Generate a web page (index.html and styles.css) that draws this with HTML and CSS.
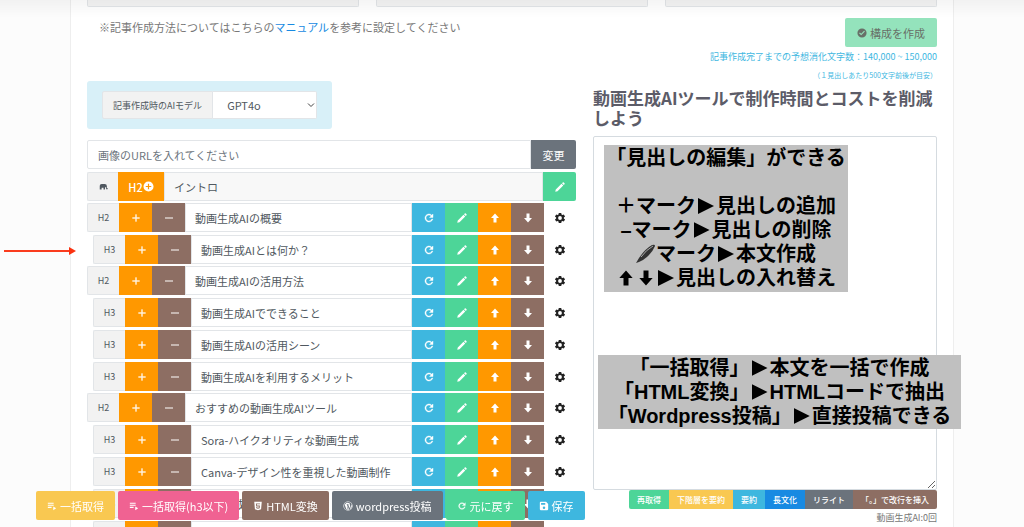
FILE: index.html
```html
<!DOCTYPE html>
<html lang="ja">
<head>
<meta charset="utf-8">
<title>記事作成</title>
<link rel="stylesheet" href="styles.css">
</head>
<body>
<svg class="sprite" aria-hidden="true">
  <symbol id="plus" viewBox="0 0 24 24"><path d="M19 13h-6v6h-2v-6H5v-2h6V5h2v6h6z" stroke="currentColor" stroke-width="0.500"/></symbol>
  <symbol id="minus" viewBox="0 0 24 24"><path d="M20 13H4v-2h16z"/></symbol>
  <symbol id="refresh" viewBox="0 0 24 24"><path d="M17.650 6.350A8 8 0 1 0 19.730 14h-2.080A6 6 0 1 1 12 6c1.660 0 3.140.690 4.220 1.780L13 11h7V4z" stroke="currentColor" stroke-width="0.800"/></symbol>
  <symbol id="pencil" viewBox="0 0 24 24"><path d="M2.500 21.500l1-4.500L15 5.500l3.500 3.500L7 20.500zM16 4.500l1.500-1.500a1.600 1.600 0 0 1 2.200 0l1.300 1.300a1.600 1.600 0 0 1 0 2.200L19.500 8z"/></symbol>
  <symbol id="up" viewBox="0 0 24 24"><path d="M12 3l8 9h-5v9H9v-9H4z"/></symbol>
  <symbol id="down" viewBox="0 0 24 24"><path d="M12 21l8-9h-5V3H9v9H4z"/></symbol>
  <symbol id="gear" viewBox="0 0 24 24"><path fill-rule="evenodd" d="M9.500 2h5l.5 3 1.800 1 2.800-1.100 2.500 4.300-2.400 1.900v1.800l2.400 1.900-2.500 4.300-2.800-1.100-1.800 1-.5 3h-5L9 19l-1.800-1-2.800 1.100-2.500-4.300 2.400-1.900v-1.800L1.900 9.200l2.500-4.300L7.200 6 9 5zM12 8.200a3.800 3.800 0 1 0 0 7.600 3.800 3.800 0 0 0 0-7.600z"/></symbol>
  <symbol id="check" viewBox="0 0 24 24"><path fill-rule="evenodd" d="M12 1a11 11 0 1 0 0 22 11 11 0 0 0 0-22zM10 17.500l-5-5 2-2 3 3 7-7 2 2z"/></symbol>
  <symbol id="circle-plus" viewBox="0 0 24 24"><path fill-rule="evenodd" d="M12 1a11 11 0 1 0 0 22 11 11 0 0 0 0-22zM18 13.300h-4.700V18h-2.600v-4.700H6v-2.600h4.700V6h2.600v4.700H18z"/></symbol>
  <symbol id="elephant" viewBox="0 0 24 24"><path d="M2 20V10q0-5 5-5h8q6 0 6 6v5h2v3h-4v-5h-3v6h-4v-5H7v5z"/></symbol>
  <symbol id="list" viewBox="0 0 24 24"><path d="M2 4h14v2.500H2zm0 5h14v2.500H2zm0 5h9v2.500H2zm13-1l7 4.500-7 4.500z"/></symbol>
  <symbol id="html5" viewBox="0 0 24 24"><path fill-rule="evenodd" d="M3 2h18l-1.600 17.500L12 22l-7.400-2.500zM7 6l.6 7h6.600l-.2 2.500-2 .6-2-.6v-1H7.800l.2 2.800 4 1.200 4-1.200.6-6.300H9.500L9.300 8h7.500l.2-2z"/></symbol>
  <symbol id="wordpress" viewBox="0 0 24 24"><path fill-rule="evenodd" d="M12 1a11 11 0 1 0 0 22 11 11 0 0 0 0-22zm0 1.500a9.500 9.500 0 1 1 0 19 9.500 9.500 0 0 1 0-19z"/><path d="M3.800 8.500L8.500 21 11.200 13.500 9.300 8.500H8V7.500h6v1h-1.500l3 9 1.600-5c.5-2-1.800-4-.8-6.500A9 9 0 0 0 5 7.500zM20 8c0 2-.6 3.500-1 4.600L16 20.500A9 9 0 0 0 20 8zM12.200 14.500L9.700 21h4.800z"/></symbol>
  <symbol id="save" viewBox="0 0 24 24"><path fill-rule="evenodd" d="M17 2H4a2 2 0 0 0-2 2v16a2 2 0 0 0 2 2h16a2 2 0 0 0 2-2V7zM12 19a3 3 0 1 1 0-6 3 3 0 0 1 0 6zM15 9H5V5h10z"/></symbol>
</svg>

<main class="card">
  <div class="fields">
    <div class="field"></div><div class="field"></div><div class="field"></div>
  </div>
  <div class="columns">
    <section class="outline">
      <p class="note">※記事作成方法についてはこちらの<a href="#">マニュアル</a>を参考に設定してください</p>
      <div class="model">
        <label class="model-label" for="model">記事作成時のAIモデル</label>
        <div class="select-wrap">
          <select id="model" class="model-select"><option>GPT4o</option></select>
          <svg class="chevron" viewBox="0 0 8 8"><path d="M1 2.500l3 3 3-3"/></svg>
        </div>
      </div>
      <div class="row url-row">
        <input class="title url" type="text" aria-label="画像のURL" placeholder="画像のURLを入れてください">
        <button class="change">変更</button>
      </div>
      <div class="row">
        <span class="tag intro-tag"><svg class="icon"><use href="#elephant"/></svg></span>
        <button class="add-h2">H2<svg class="icon"><use href="#circle-plus"/></svg></button>
        <input class="title intro" type="text" aria-label="イントロ" value="イントロ" readonly>
        <button class="btn green end" aria-label="本文作成"><svg class="icon"><use href="#pencil"/></svg></button>
      </div>
      <div id="groups" class="groups"></div>
    </section>

    <section class="editor">
      <button class="create"><svg class="icon"><use href="#check"/></svg>構成を作成</button>
      <p class="estimate">記事作成完了までの予想消化文字数：140,000 ~ 150,000</p>
      <p class="estimate-note">（１見出しあたり500文字前後が目安）</p>
      <h1 class="heading"><label for="body">動画生成AIツールで制作時間とコストを削減しよう</label></h1>
      <textarea id="body" class="body"></textarea>
      <div class="actions">
        <button class="green">再取得</button><button class="yellow">下階層を要約</button><button class="blue">要約</button><button class="royal">長文化</button><button class="gray">リライト</button><button class="brown">「。」で改行を挿入</button>
      </div>
      <p class="count">動画生成AI:0回</p>
    </section>
  </div>
</main>

<div class="callout callout-edit">「見出しの編集」ができる<br><br>＋マーク<b class="tri"></b>見出しの追加<br>–マーク<b class="tri"></b>見出しの削除<br><svg class="pen" viewBox="0 0 20 20"><path class="pen-body" d="M0 19L3 14Q9 5 16 1q3-1 3 1Q16 10 7 16L3 18z"/><path class="pen-shine" d="M5 13Q10 6 17 2"/></svg>マーク<b class="tri"></b>本文作成<br><svg class="arrow"><use href="#up"/></svg><svg class="arrow"><use href="#down"/></svg><b class="tri"></b>見出しの入れ替え</div>
<div class="callout callout-bulk">「一括取得」<b class="tri"></b>本文を一括で作成<br>「HTML変換」<b class="tri"></b>HTMLコードで抽出<br>「Wordpress投稿」<b class="tri"></b>直接投稿できる</div>
<svg class="pointer" viewBox="0 0 74 10"><path d="M1 5h66" stroke="#fa3c1e" stroke-width="2"/><path d="M66 1l7 4-7 4z" fill="#fa3210"/></svg>

<nav class="toolbar">
  <button class="yellow"><svg class="icon"><use href="#list"/></svg>一括取得</button>
  <button class="pink"><svg class="icon"><use href="#list"/></svg>一括取得(h3以下)</button>
  <button class="brown"><svg class="icon"><use href="#html5"/></svg>HTML変換</button>
  <button class="gray"><svg class="icon"><use href="#wordpress"/></svg>wordpress投稿</button>
  <button class="green"><svg class="icon"><use href="#refresh"/></svg>元に戻す</button>
  <button class="blue"><svg class="icon"><use href="#save"/></svg>保存</button>
</nav>
<script src="outline.js"></script>
</body>
</html>
```
FILE: styles.css
```css
* { box-sizing: border-box; }
body {
  margin: 0;
  height: 100vh;
  overflow: hidden;
  background: #fcfcfc;
  color: #505860;
  font-family: "Noto Sans CJK JP", sans-serif;
  font-size: 11px;
}
body::before {
  content: "";
  position: fixed;
  inset: 0 0 auto;
  height: 18px;
  background: linear-gradient(rgba(0, 0, 0, .04), transparent);
  pointer-events: none;
}
p, h1 { margin: 0; }
button, input, select, textarea { font: inherit; color: inherit; margin: 0; }
button {
  display: flex;
  align-items: center;
  justify-content: center;
  border: 0;
  padding: 0;
  color: #fff;
  white-space: nowrap;
}
.sprite { position: absolute; width: 0; height: 0; }
.icon { width: 12px; height: 12px; fill: currentColor; flex: none; }
.green { background: #4dd598; }
.yellow { background: #f9c851; }
.blue { background: #3eb7df; }
.royal { background: #188ae2; }
.gray { background: #6b737c; }
.brown { background: #8d6e63; }
.orange { background: #ff9800; }
.pink { background: #f06292; }

.card {
  margin: 0 70px;
  padding: 0 16px;
  min-height: 100vh;
  background: #fff;
  border: solid #eee;
  border-width: 0 1px;
}
.fields { display: grid; grid-template-columns: repeat(3, 1fr); gap: 17px; }
.field {
  height: 7px;
  background: #f4f4f4;
  border: 1px solid #e2e5e8;
  border-top: 0;
  border-radius: 0 0 2px 2px;
}
.columns { display: grid; grid-template-columns: 489fr 344fr; gap: 17px; }
.outline { display: flex; flex-direction: column; gap: 2px; padding-top: 11px; min-width: 0; }
.note { padding-left: 12px; line-height: 18px; color: #777; }
.note a { color: #188ae2; text-decoration: none; }
.model {
  display: flex;
  align-self: flex-start;
  margin: 43px 0 9px;
  padding: 10px 15px;
  background: #d8f0f8;
  border-radius: 3px;
}
.model-label {
  display: flex;
  align-items: center;
  padding: 0 10px;
  font-size: 9px;
  background: #f2f2f2;
  border: 1px solid #e2e5e8;
  border-radius: 2px 0 0 2px;
}
.select-wrap { position: relative; }
.model-select {
  appearance: none;
  width: 104px;
  height: 28px;
  padding: 0 14px;
  background: #fff;
  border: 1px solid #e2e5e8;
  border-left: 0;
  border-radius: 0 2px 2px 0;
}
.chevron { position: absolute; right: 2px; top: 10px; width: 8px; height: 8px; fill: none; stroke: #444; }
.row { display: flex; height: 29px; }
.url-row { margin-bottom: 1px; }
.title {
  flex: 1;
  min-width: 0;
  padding: 0 9px;
  background: #fff;
  border: 1px solid #e2e5e8;
}
.url { padding: 0 10px; border-radius: 2px 0 0 2px; }
.url::placeholder { color: #6c757d; opacity: 1; }
.intro { background: #f8f8f8; }
.change { width: 45px; background: #6b737c; border-radius: 0 2px 2px 0; }
.tag {
  display: flex;
  align-items: center;
  justify-content: center;
  width: 32px;
  font-size: 9px;
  background: #f2f2f2;
  border: 1px solid #e2e5e8;
  border-right: 0;
  border-radius: 2px 0 0 2px;
}
.intro-tag { width: 31px; }
.intro-tag .icon { width: 9px; height: 9px; }
.add-h2 { width: 46px; background: #ff9800; font-weight: 500; }
.add-h2 .icon { width: 11px; height: 11px; }
.btn { width: 33px; }
.end { border-radius: 0 2px 2px 0; }
.groups { display: flex; flex-direction: column; gap: 2px; }
.group { display: flex; flex-direction: column; gap: 3px; }
.h3 { padding-left: 6px; }
.settings { width: 32px; background: none; color: #222; }

.editor { display: flex; flex-direction: column; padding-top: 11px; min-width: 0; }
.create {
  align-self: flex-end;
  gap: 3px;
  width: 92px;
  height: 29px;
  background: #94e3bc;
  color: #687068;
  border-radius: 2px;
}
.create .icon { width: 10px; height: 10px; }
.estimate { line-height: 20px; font-size: 9px; text-align: right; color: #3eb7df; }
.estimate-note { line-height: 16px; font-size: 7px; text-align: right; color: #3eb7df; }
.heading { padding: 5px 0 8px; font-size: 17px; line-height: 20px; font-weight: 700; color: #5c5c68; }
.body {
  display: block;
  height: 354px;
  width: 100%;
  background: #fff;
  border: 1px solid #d5dbe0;
  border-radius: 2px;
}
.actions { display: flex; align-self: flex-end; }
.actions button { height: 19px; padding: 0 8px; font-size: 8px; font-weight: 500; }
.actions button:first-child { border-radius: 2px 0 0 2px; }
.actions button:last-child { border-radius: 0 2px 2px 0; }
.count { line-height: 18px; font-size: 9px; text-align: right; color: #777; }

.toolbar { position: fixed; left: 36px; bottom: 7px; display: flex; gap: 3px; }
.toolbar button { height: 29px; padding: 0 11px; gap: 3px; border-radius: 2px; }
.toolbar .icon { width: 10px; height: 10px; }

.callout {
  position: absolute;
  background: #c0c0c0;
  color: #000;
  text-align: center;
  white-space: nowrap;
  font-family: "Liberation Sans", "Noto Sans CJK JP", sans-serif;
  font-size: 20px;
  font-weight: 700;
  line-height: 24px;
}
.callout-edit { left: 604px; top: 145px; width: 244px; height: 147px; padding-top: 1px; }
.callout-bulk { left: 598px; top: 355px; width: 363px; height: 74px; padding-top: 1px; }
.tri {
  display: inline-block;
  width: 16px;
  height: 16px;
  margin: 0 2px;
  background: #000;
  clip-path: polygon(0 0, 100% 50%, 0 100%);
  vertical-align: -1px;
}
.pen { width: 20px; height: 20px; vertical-align: -3px; }
.pen-body { fill: #333; }
.pen-shine { fill: none; stroke: #aaa; stroke-width: 1; }
.arrow { width: 20px; height: 20px; vertical-align: -3px; }
.pointer { position: absolute; left: 3px; top: 246px; width: 74px; height: 10px; }
```
FILE: outline.js
```js
const groups = [
  ["動画生成AIの概要", "動画生成AIとは何か？"],
  ["動画生成AIの活用方法", "動画生成AIでできること", "動画生成AIの活用シーン", "動画生成AIを利用するメリット"],
  ["おすすめの動画生成AIツール", "Sora-ハイクオリティな動画生成", "Canva-デザイン性を重視した動画制作", "動画生成AIツールの比較", ""]
];
const button = (color, icon, label) =>
  `<button class="btn ${color}" aria-label="${label}"><svg class="icon"><use href="#${icon}"/></svg></button>`;
const row = (title, i) => {
  const level = i ? "h3" : "h2";
  return `<div class="row ${level}"><span class="tag">${title && level.toUpperCase()}</span>` +
    button("orange", "plus", "追加") + button("brown", "minus", "削除") +
    `<input class="title" type="text" aria-label="見出し" value="${title}">` +
    button("blue", "refresh", "再取得") + button("green", "pencil", "本文作成") +
    button("orange", "up", "上へ") + button("brown", "down", "下へ") +
    `<button class="settings" aria-label="設定"><svg class="icon"><use href="#gear"/></svg></button></div>`;
};
document.getElementById("groups").innerHTML =
  groups.map(g => `<div class="group">${g.map(row).join("")}</div>`).join("");
```
